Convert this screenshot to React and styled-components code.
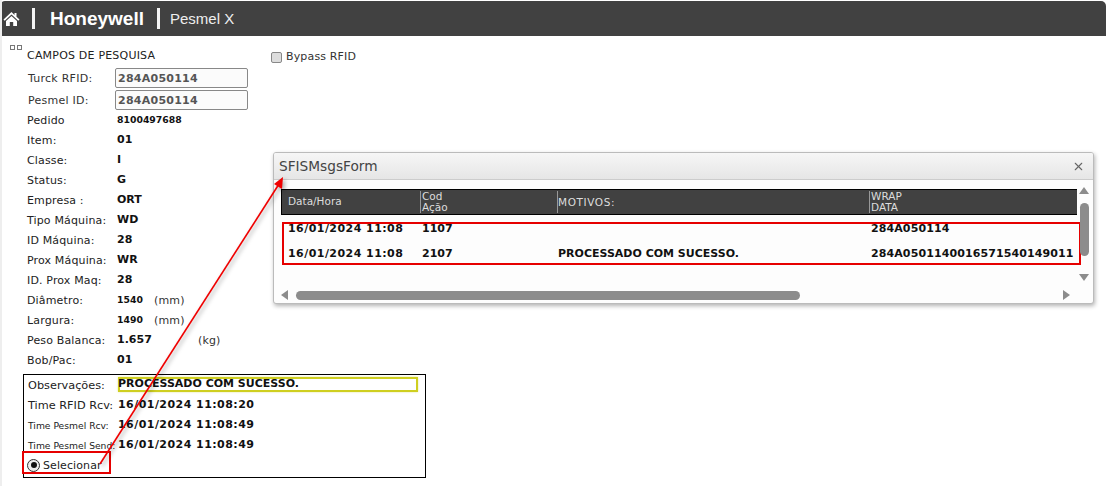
import styled, { createGlobalStyle } from 'styled-components'
import { X } from 'lucide-react'

const GlobalStyle = createGlobalStyle`
html, body {
    margin: 0;
    padding: 0;
    background: #fff;
}
body {
    width: 1106px;
    height: 486px;
    overflow: hidden;
    font-family: "DejaVu Sans", Verdana, sans-serif;
    font-size: 11px;
    color: #222;
}
`

const Page = styled.div`
position: relative;
width: 1106px;
height: 486px;
overflow: hidden;
border-left: 2px solid #eee;
box-sizing: border-box;
`

const TopBar = styled.header`
display: flex;
align-items: center;
height: 35px;
margin-top: 1px;
margin-left: -2px;
background: #414141;
border-radius: 5px 5px 0 0;
color: #fff;
`

const HomeLink = styled.span`
display: flex;
width: 20px;
margin-left: 3px;
`

const BarDivider = styled.span`
width: 3px;
height: 21px;
margin: ${p => p.$margin};
background: #f4f4f4;
`

const Brand = styled.span`
font-family: "Liberation Sans", Arial, sans-serif;
font-size: 19px;
font-weight: 700;
`

const AppName = styled.span`
font-family: "Liberation Sans", Arial, sans-serif;
font-size: 15px;
color: #eee;
`

const Content = styled.main`
display: flex;
padding: 11px 0 0 8px;
`

const LeftColumn = styled.section`
display: flex;
flex-direction: column;
width: 416px;
`

const SectionTitle = styled.div`
position: relative;
height: 20px;
margin-left: 17px;
line-height: 18px;
font-size: 11px;
letter-spacing: 0.2px;
`

const TreeDots = styled.span`
position: absolute;
left: -17px;
top: -2px;
display: flex;
gap: 2px;

i {
    width: 3px;
    height: 3px;
    border: 1px solid #777;
}
`

const InputRow = styled.div`
display: flex;
align-items: center;
height: 22px;
margin-left: 18px;
`

const InputLabel = styled.label`
width: 87px;
color: #333;
letter-spacing: 0.25px;
`

const FakeInput = styled.div`
box-sizing: border-box;
width: 133px;
height: 20px;
padding-left: 2px;
border: 1px solid #888;
border-radius: 2px;
background: #fbfbfb;
color: #555;
font-weight: 700;
letter-spacing: 0.25px;
line-height: 20px;
`

const RowList = styled.div`
display: flex;
flex-direction: column;
margin-top: -1px;
`

const Row = styled.div`
display: flex;
align-items: center;
height: 20px;
margin-left: 17px;
`

const Label = styled.span`
width: 90px;
white-space: nowrap;
letter-spacing: 0.15px;
`

const Value = styled.span`
width: ${p => p.$width || 'auto'};
font-size: ${p => p.$small ? '9.3px' : '11px'};
font-weight: 700;
color: #111;
transform: translateY(-1px);
`

const Unit = styled.span`
color: #333;
letter-spacing: 0.15px;
`

const ResultBox = styled.section`
position: relative;
box-sizing: border-box;
width: 403px;
height: 104px;
margin: 4px 0 0 13px;
padding: 0 4px;
border: 1px solid #000;
`

const ResultRow = styled.div`
display: flex;
align-items: center;
height: 20px;
`

const ResultLabel = styled.span`
width: 90px;
font-size: ${p => p.$small ? '9.2px' : '11.3px'};
white-space: nowrap;
color: #222;
`

const ObservationField = styled.div`
box-sizing: border-box;
width: 300px;
height: 15px;
margin-top: -1px;
text-indent: -2px;
border: 2px solid #cfcf20;
font-weight: 700;
line-height: 10px;
color: #111;
white-space: nowrap;
box-shadow: 0 0 2px #e6e69a;
`

const ResultValue = styled.span`
font-weight: 700;
letter-spacing: 0.45px;
color: #111;
transform: translateY(-1px);
`

const RadioRow = styled.label`
display: flex;
align-items: center;
gap: 3px;
height: 20px;
margin-left: -1px;
letter-spacing: 0.1px;
`

const RadioOuter = styled.span`
display: flex;
align-items: center;
justify-content: center;
width: 11px;
height: 11px;
border: 1px solid #333;
border-radius: 50%;
background: #eee;

&::after {
    content: "";
    width: 6px;
    height: 6px;
    border-radius: 50%;
    background: #111;
}
`

const SelectHighlight = styled.span`
position: absolute;
left: -2px;
top: 76px;
width: 85px;
height: 19px;
border: 2px solid #e60000;
`

const BypassLabel = styled.label`
display: flex;
align-items: center;
gap: 4px;
height: 20px;
margin: -1px 0 0 -155px;
color: #333;
letter-spacing: 0.15px;
`

const CheckBox = styled.span`
box-sizing: border-box;
width: 11px;
height: 11px;
margin-top: 2px;
border: 1px solid #888;
border-radius: 2px;
background: #ddd;
`

const Dialog = styled.section`
position: absolute;
left: 271px;
top: 152px;
box-sizing: border-box;
width: 821px;
height: 152px;
border: 1px solid #bbb;
border-radius: 3px;
background: #fdfdfd;
box-shadow: 1px 2px 4px rgba(0, 0, 0, 0.3);
overflow: hidden;
`

const DialogTitle = styled.div`
display: flex;
align-items: center;
justify-content: space-between;
height: 26px;
padding: 0 8px 0 5px;
border-bottom: 1px solid #ccc;
background: linear-gradient(#f6f6f6, #e6e6e6);
font-size: 13.7px;
color: #444;
`

const CloseIcon = styled(X)`
color: #666;
`

const DialogBody = styled.div`
position: relative;
display: flex;
height: 124px;
`

const GridArea = styled.div`
width: 796px;
padding: 9px 0 0 7px;
`

const columns = '138px 137px 312px 1fr'

const TableHeader = styled.div`
display: grid;
grid-template-columns: ${columns};
height: 24px;
border-top: 1px solid #000;
border-bottom: 1px solid #000;
border-left: 1px solid #000;
background: #414141;
color: #ddd;
`

const HeaderCell = styled.div`
display: flex;
align-items: center;
margin: 1px 0;
padding-left: ${p => p.$pad};
padding-bottom: ${p => p.$first ? '2px' : '0'};
border-left: ${p => p.$first ? 'none' : '1px solid #999'};
font-size: 10.5px;
letter-spacing: ${p => p.$wide ? '0.6px' : '0'};
line-height: 11px;
`

const TableRows = styled.div`
position: relative;
margin-top: 1px;
`

const TableRow = styled.div`
display: grid;
grid-template-columns: ${columns};
height: 25px;
margin-left: 1px;
align-items: center;
font-weight: 700;
color: #111;
white-space: nowrap;
`

const TableCell = styled.span`
padding-left: ${p => p.$pad};
letter-spacing: ${p => p.$spacing || '0'};
`

const RowsHighlight = styled.div`
position: absolute;
left: 1px;
top: 6px;
width: 795px;
height: 39px;
border: 2px solid #e60000;
`

const VerticalTrack = styled.div`
position: absolute;
right: 2px;
top: 0;
bottom: 15px;
display: flex;
flex-direction: column;
align-items: center;
width: 14px;
`

const Thumb = styled.div`
border-radius: 5px;
background: #8c8c8c;
${p => p.$vertical
        ? 'width: 9px; height: 53px; margin-top: 9px;'
        : 'height: 9px; width: 504px; margin-left: 8px;'}
`

const HorizontalTrack = styled.div`
position: absolute;
left: 0;
bottom: 2px;
display: flex;
align-items: center;
width: 796px;
height: 14px;
padding-left: 7px;
box-sizing: border-box;
`

const ArrowGlyph = styled.svg`
display: block;
flex: none;
fill: #8c8c8c;
margin: ${p => p.$margin || 0};
`

const AnnotationLayer = styled.svg`
position: absolute;
left: -2px;
top: 0;
width: 1106px;
height: 486px;
pointer-events: none;
filter: drop-shadow(2px 2px 2px rgba(0, 0, 0, 0.35));
`

const fields = [
    ['Item:', '01'],
    ['Classe:', 'I'],
    ['Status:', 'G'],
    ['Empresa :', 'ORT'],
    ['Tipo Máquina:', 'WD'],
    ['ID Máquina:', '28'],
    ['Prox Máquina:', 'WR'],
    ['ID. Prox Maq:', '28'],
]

const rows = [
    ['16/01/2024 11:08', '1107', '', '284A050114'],
    ['16/01/2024 11:08', '2107', 'PROCESSADO COM SUCESSO.', '284A0501140016571540149011'],
]

function App() {
    return (
        <Page>
            <GlobalStyle />
            <TopBar>
                <HomeLink>
                    <svg width="17" height="16" viewBox="0 0 17 16" fill="#fff">
                        <path d="M8.5 1 0.5 8.6 1.7 9.8 8.5 3.4 15.3 9.8 16.5 8.6 13.5 5.8V2h-2v1.9z" />
                        <path d="M3 10 8.5 4.9 14 10v5h-3.8v-4H6.8v4H3z" />
                    </svg>
                </HomeLink>
                <BarDivider $margin="0 15px 0 9px" />
                <Brand>Honeywell</Brand>
                <BarDivider $margin="0 10px 0 13px" />
                <AppName>Pesmel X</AppName>
            </TopBar>
            <Content>
                <LeftColumn>
                    <SectionTitle>
                        <TreeDots><i /><i /></TreeDots>
                        CAMPOS DE PESQUISA
                    </SectionTitle>
                    <InputRow>
                        <InputLabel>Turck RFID:</InputLabel>
                        <FakeInput>284A050114</FakeInput>
                    </InputRow>
                    <InputRow>
                        <InputLabel>Pesmel ID:</InputLabel>
                        <FakeInput>284A050114</FakeInput>
                    </InputRow>
                    <RowList>
                        <Row>
                            <Label>Pedido</Label>
                            <Value $small>8100497688</Value>
                        </Row>
                        {fields.map(([label, value]) => (
                            <Row key={label}>
                                <Label>{label}</Label>
                                <Value>{value}</Value>
                            </Row>
                        ))}
                        <Row>
                            <Label>Diâmetro:</Label>
                            <Value $small $width="37px">1540</Value>
                            <Unit>(mm)</Unit>
                        </Row>
                        <Row>
                            <Label>Largura:</Label>
                            <Value $small $width="37px">1490</Value>
                            <Unit>(mm)</Unit>
                        </Row>
                        <Row>
                            <Label>Peso Balanca:</Label>
                            <Value $width="81px">1.657</Value>
                            <Unit>(kg)</Unit>
                        </Row>
                        <Row>
                            <Label>Bob/Pac:</Label>
                            <Value>01</Value>
                        </Row>
                    </RowList>
                    <ResultBox>
                        <ResultRow>
                            <ResultLabel>Observações:</ResultLabel>
                            <ObservationField>PROCESSADO COM SUCESSO.</ObservationField>
                        </ResultRow>
                        <ResultRow>
                            <ResultLabel>Time RFID Rcv:</ResultLabel>
                            <ResultValue>16/01/2024 11:08:20</ResultValue>
                        </ResultRow>
                        <ResultRow>
                            <ResultLabel $small>Time Pesmel Rcv:</ResultLabel>
                            <ResultValue>16/01/2024 11:08:49</ResultValue>
                        </ResultRow>
                        <ResultRow>
                            <ResultLabel $small>Time Pesmel Send:</ResultLabel>
                            <ResultValue>16/01/2024 11:08:49</ResultValue>
                        </ResultRow>
                        <RadioRow>
                            <RadioOuter />
                            Selecionar
                        </RadioRow>
                        <SelectHighlight />
                    </ResultBox>
                </LeftColumn>
                <BypassLabel>
                    <CheckBox />
                    Bypass RFID
                </BypassLabel>
            </Content>
            <Dialog>
                <DialogTitle>
                    SFISMsgsForm
                    <CloseIcon size={13} strokeWidth={2} />
                </DialogTitle>
                <DialogBody>
                    <GridArea>
                        <TableHeader>
                            <HeaderCell $first $pad="6px">Data/Hora</HeaderCell>
                            <HeaderCell $pad="1px">Cod<br />Ação</HeaderCell>
                            <HeaderCell $wide $pad="0">MOTIVOS:</HeaderCell>
                            <HeaderCell $pad="1px">WRAP<br />DATA</HeaderCell>
                        </TableHeader>
                        <TableRows>
                            {rows.map(row => (
                                <TableRow key={row[1]}>
                                    <TableCell $pad="6px" $spacing="0.45px">{row[0]}</TableCell>
                                    <TableCell $pad="2px">{row[1]}</TableCell>
                                    <TableCell $pad="1px">{row[2]}</TableCell>
                                    <TableCell $pad="2px" $spacing="0.1px">{row[3]}</TableCell>
                                </TableRow>
                            ))}
                            <RowsHighlight />
                        </TableRows>
                    </GridArea>
                    <VerticalTrack>
                        <ArrowGlyph width="10" height="7" viewBox="0 0 10 7" $margin="7px 0 0"><path d="M5 0 10 7H0z" /></ArrowGlyph>
                        <Thumb $vertical />
                        <ArrowGlyph width="10" height="7" viewBox="0 0 10 7" $margin="auto 0 8px"><path d="M0 0H10L5 7z" /></ArrowGlyph>
                    </VerticalTrack>
                    <HorizontalTrack>
                        <ArrowGlyph width="7" height="10" viewBox="0 0 7 10"><path d="M7 0V10L0 5z" /></ArrowGlyph>
                        <Thumb />
                        <ArrowGlyph width="7" height="10" viewBox="0 0 7 10" $margin="0 0 0 auto"><path d="M0 0 7 5 0 10z" /></ArrowGlyph>
                    </HorizontalTrack>
                </DialogBody>
            </Dialog>
            <AnnotationLayer viewBox="0 0 1106 486">
                <line x1="100" y1="464" x2="279" y2="184" stroke="#f00000" strokeWidth="1.6" />
                <path d="M283 177 282 189 274 184z" fill="#f00000" />
            </AnnotationLayer>
        </Page>
    )
}

export default App
